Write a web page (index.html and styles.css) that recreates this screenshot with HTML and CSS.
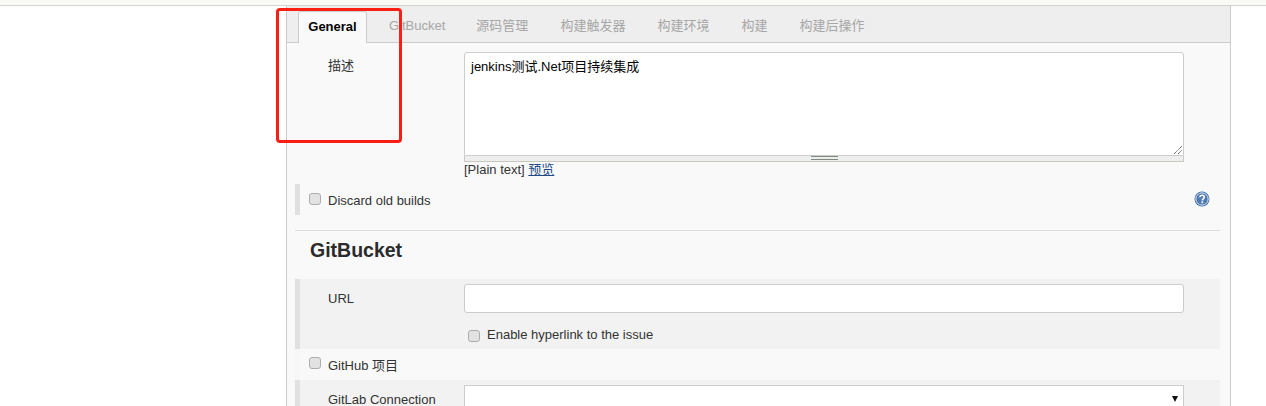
FILE: index.html
```html
<!DOCTYPE html>
<html lang="zh">
<head>
<meta charset="utf-8">
<title>Jenkins</title>
<link rel="stylesheet" href="styles.css">
</head>
<body>
<div class="topstrip"></div>
<main class="panel">
  <nav class="tabs">
    <a class="tab active">General</a>
    <a class="tab t-gitbucket">GitBucket</a>
    <a class="tab t-scm">源码管理</a>
    <a class="tab t-trigger">构建触发器</a>
    <a class="tab t-env">构建环境</a>
    <a class="tab t-build">构建</a>
    <a class="tab t-post">构建后操作</a>
  </nav>
  <div class="body">
    <div class="field desc">
      <label class="label">描述</label>
      <div class="control">
        <div class="textarea-wrap">
          <div class="textarea">jenkins测试.Net项目持续集成<svg class="resize" width="8" height="8" viewBox="0 0 8 8"><path d="M0 8 8 0M4 8l4-4" stroke="#555" stroke-width="1" stroke-dasharray="1.2 .5" fill="none"/></svg></div>
          <div class="grip"><span class="grip-mark"></span></div>
        </div>
        <div class="hint">[Plain text] <a class="link">预览</a></div>
      </div>
    </div>
    <div class="opt discard">
      <span class="check"></span><span class="opt-label">Discard old builds</span>
      <svg class="help" width="16" height="16" viewBox="0 0 16 16">
        <circle cx="8" cy="8" r="7.5" fill="#3465a4"/>
        <circle cx="8" cy="8" r="6.2" fill="#4f79b2" stroke="#e4ecf5" stroke-width="1"/>
        <path d="M5.9 6.2C6 4.9 6.9 4.2 8.1 4.2c1.3 0 2.2.8 2.2 1.9 0 1.8-2 1.8-2 3.4" fill="none" stroke="#fff" stroke-width="1.6"/>
        <rect x="7.4" y="10.4" width="1.8" height="1.8" fill="#fff"/>
      </svg>
    </div>
    <hr class="rule">
    <h2 class="heading">GitBucket</h2>
    <section class="group url">
      <div class="group-row">
        <label class="label">URL</label>
        <div class="control"><div class="input"></div></div>
      </div>
      <div class="sub-check"><span class="check"></span><span class="opt-label">Enable hyperlink to the issue</span></div>
    </section>
    <div class="opt github"><span class="check"></span><span class="opt-label">GitHub 项目</span></div>
    <section class="group gitlab">
      <div class="group-row">
        <label class="label">GitLab Connection</label>
        <div class="control"><div class="select"><span class="arrow"></span></div></div>
      </div>
    </section>
  </div>
</main>
<div class="annotation"></div>
</body>
</html>
```
FILE: styles.css
```css
* { box-sizing: border-box; }
html, body { margin: 0; height: 406px; overflow: hidden; background: #fff; }
body {
  font-family: "Liberation Sans", "Noto Sans CJK SC", sans-serif;
  font-size: 13px;
  color: #333;
  position: relative;
}
.topstrip { height: 6px; background: #f8faf3; border-bottom: 1px solid #d3d3d3; }
.panel {
  width: 945px;
  margin-left: 286px;
  height: 400px;
  background: #f9f9f9;
  border-left: 1px solid #ccc;
  border-right: 1px solid #ccc;
}
.tabs {
  height: 37px;
  display: flex;
  padding-left: 11px;
  background: #eee;
  border-bottom: 1px solid #ccc;
}
.tab {
  height: 32px;
  margin-top: 5px;
  color: #a6a6a6;
  line-height: 29px;
  white-space: nowrap;
}
.tab.active {
  width: 69px;
  text-align: center;
  color: #000;
  font-weight: bold;
  background: #f9f9f9;
  border: 1px solid #ccc;
  border-bottom: 0;
  border-radius: 3px 3px 0 0;
}
.t-gitbucket { margin-left: 22px; }
.t-scm { margin-left: 31px; }
.t-trigger { margin-left: 32px; }
.t-env { margin-left: 32px; }
.t-build { margin-left: 32px; }
.t-post { margin-left: 32px; }
.body { padding: 9px 10px 0 9px; }
.field { display: flex; }
.label {
  width: 168px;
  padding-left: 32px;
  flex: none;
  color: #333;
  line-height: 18px;
}
.desc .label { padding-top: 5px; }
.control { width: 720px; flex: none; }
.textarea-wrap { height: 110px; }
.textarea {
  position: relative;
  height: 104px;
  background: #fff;
  border: 1px solid #ccc;
  border-radius: 3px 3px 0 0;
  padding: 5px 6px;
  color: #000;
  line-height: 18px;
}
.resize { position: absolute; right: 1px; bottom: 1px; }
.grip {
  height: 6px;
  background: #eee;
  border: 1px solid #c8c8c0;
  border-top: 0;
  display: flex;
  justify-content: center;
}
.grip-mark {
  width: 27px;
  height: 4px;
  border-top: 1px solid #7f8a80;
  border-bottom: 1px solid #7f8a80;
}
.hint { height: 22px; line-height: 15px; color: #333; }
.link { color: #204a87; text-decoration: underline; }
.opt {
  height: 31px;
  display: flex;
  align-items: center;
  border-left: 5px solid #e0e0e0;
  margin-left: -1px;
  position: relative;
}
.check {
  width: 12px;
  height: 12px;
  flex: none;
  background: #e2e2e2;
  border: 1px solid #adadad;
  border-radius: 3px;
}
.discard .check { margin: -2px 0 0 9px; }
.discard .opt-label { padding-top: 2px; }
.github .check { margin: -3px 0 0 9px; }
.github .opt-label { padding-top: 2px; }
.opt-label { color: #333; margin-left: 7px; line-height: 18px; }
.help { position: absolute; right: 10px; top: 7px; }
.rule { margin: 15px 0 0 -1px; border: 0; border-top: 1px solid #ddd; height: 0; }
.heading {
  margin: 0 0 0 14px;
  font-size: 19.5px;
  font-weight: bold;
  color: #2b2b2b;
  height: 48px;
  padding-top: 7px;
  line-height: 24px;
}
.group {
  margin-left: -1px;
  background: #f2f2f2;
  border-left: 5px solid #e0e0e0;
}
.url { height: 70px; padding-top: 5px; }
.group .label { width: 164px; padding-left: 28px; line-height: 29px; }
.input { height: 29px; background: #fff; border: 1px solid #ccc; border-radius: 3px; }
.group-row { display: flex; }
.sub-check { display: flex; align-items: center; margin-left: 168px; margin-top: 13px; height: 18px; }
.sub-check .check { margin-top: 2px; }
.github { border-left-color: #f7f7f7; }
.gitlab { height: 40px; padding-top: 5px; }
.select {
  height: 40px;
  background: #fff;
  border: 1px solid #ccc;
  position: relative;
}
.arrow {
  position: absolute;
  right: 5px;
  top: 10px;
  border-left: 3px solid transparent;
  border-right: 3px solid transparent;
  border-top: 6px solid #111;
}
.gitlab .label { line-height: 30px; }
.annotation {
  position: absolute;
  left: 276px;
  top: 8px;
  width: 126px;
  height: 135px;
  border: 3px solid #fb1e14;
  border-radius: 4px;
}
```
